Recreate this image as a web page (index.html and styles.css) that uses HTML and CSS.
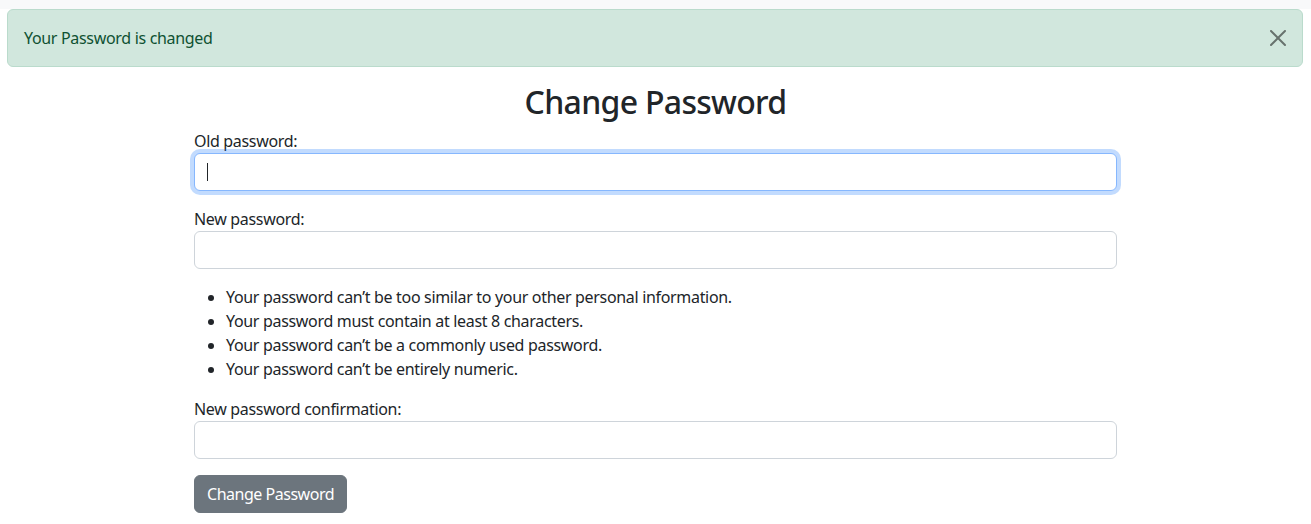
FILE: index.html
```html
<!DOCTYPE html>
<html lang="en">
<head>
  <meta charset="UTF-8">
  <meta name="viewport" content="width=device-width, initial-scale=1.0">
  <title>Change Password</title>
  <link rel="stylesheet" href="styles.css">
</head>
<body>
  <div class="topbar"></div>

  <div class="alert">
    Your Password is changed
    <button type="button" class="btn-close" aria-label="Close">
      <svg viewBox="0 0 16 16" width="16" height="16">
        <path d="M.293.293a1 1 0 0 1 1.414 0L8 6.586 14.293.293a1 1 0 1 1 1.414 1.414L9.414 8l6.293 6.293a1 1 0 0 1-1.414 1.414L8 9.414l-6.293 6.293a1 1 0 0 1-1.414-1.414L6.586 8 .293 1.707a1 1 0 0 1 0-1.414z" fill="#000"/>
      </svg>
    </button>
  </div>

  <div class="container">
    <h2>Change Password</h2>
    <form>
      <div class="field">
        <label for="id_old_password">Old password:</label>
        <div class="input-wrap">
          <input type="password" id="id_old_password" class="form-control focused">
          <span class="caret"></span>
        </div>
      </div>

      <div class="field">
        <label for="id_new_password1">New password:</label>
        <input type="password" id="id_new_password1" class="form-control">
      </div>

      <ul class="helptext">
        <li>Your password can’t be too similar to your other personal information.</li>
        <li>Your password must contain at least 8 characters.</li>
        <li>Your password can’t be a commonly used password.</li>
        <li>Your password can’t be entirely numeric.</li>
      </ul>

      <div class="field">
        <label for="id_new_password2">New password confirmation:</label>
        <input type="password" id="id_new_password2" class="form-control">
      </div>

      <button type="submit" class="btn">Change Password</button>
    </form>
  </div>
</body>
</html>
```

FILE: styles.css
```css
body {
  font-family: "Noto Sans", "Liberation Sans", sans-serif;
  font-size: 16px;
  line-height: 1.5;
  letter-spacing: -0.02em;
  color: #212529;
  margin: 0;
  padding: 0;
  background-color: #fff;
}

.topbar {
  height: 9px;
  background-color: #f8f9fa;
}

.alert {
  position: relative;
  margin: 0 8px 16px 7px;
  padding: 16px 48px 16px 16px;
  border: 1px solid #badbcc;
  border-radius: 6px;
  background-color: #d1e7dd;
  color: #0f5132;
}

.btn-close {
  position: absolute;
  top: 0;
  right: 0;
  width: 48px;
  height: 100%;
  padding: 0;
  border: none;
  background: transparent;
  opacity: 0.5;
  display: flex;
  align-items: center;
  justify-content: center;
  cursor: pointer;
}

.container {
  max-width: 923px;
  margin: 0 auto;
}

h2 {
  margin: 0 0 8px;
  font-size: 32px;
  font-weight: 500;
  line-height: 1.2;
  letter-spacing: -0.022em;
  text-align: center;
}

.field {
  margin-bottom: 16px;
}

label {
  display: block;
}

.input-wrap {
  position: relative;
}

.form-control {
  display: block;
  width: 100%;
  box-sizing: border-box;
  height: 38px;
  padding: 6px 12px;
  font: inherit;
  color: #212529;
  background-color: #fff;
  border: 1px solid #ced4da;
  border-radius: 6px;
  outline: none;
}

.form-control.focused {
  border-color: #86b7fe;
  box-shadow: 0 0 0 4px rgba(13, 110, 253, 0.25);
}

/* курсор в активном поле */
.caret {
  position: absolute;
  left: 13px;
  top: 10px;
  width: 1px;
  height: 18px;
  background-color: #212529;
}

.helptext {
  margin: 0 0 16px;
  padding-left: 32px;
}

.btn {
  display: inline-block;
  padding: 6px 12px;
  font: inherit;
  letter-spacing: -0.03em;
  color: #fff;
  background-color: #6c757d;
  border: 1px solid #6c757d;
  border-radius: 6px;
  cursor: pointer;
}
```
